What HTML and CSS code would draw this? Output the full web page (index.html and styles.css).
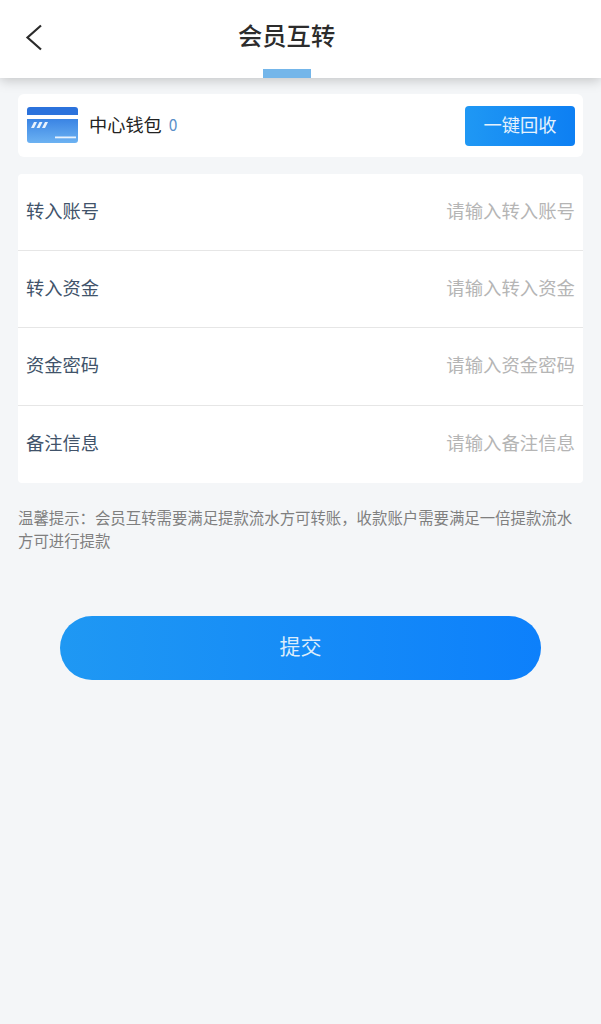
FILE: index.html
```html
<!DOCTYPE html>
<html lang="zh-CN">
<head>
<meta charset="UTF-8">
<title>会员互转</title>
<link rel="stylesheet" href="styles.css">
</head>
<body>
  <header class="top-bar">
    <a class="back-btn" href="#">
      <svg width="18" height="27" viewBox="0 0 18 27"><path d="M16 1.5 L2.5 13.5 L16 25.5" fill="none" stroke="#2b2b2b" stroke-width="2.2"/></svg>
    </a>
    <div class="title-box">
      <h1>会员互转</h1>
      <span class="title-tab"></span>
    </div>
  </header>

  <section class="wallet">
    <svg class="wallet-icon" width="51" height="36" viewBox="0 0 51 36">
      <defs>
        <linearGradient id="cardFill" x1="0" y1="0" x2="0" y2="1">
          <stop offset="0" stop-color="#3a84e4"/>
          <stop offset="1" stop-color="#6cb2f2"/>
        </linearGradient>
      </defs>
      <path d="M0 8V3a3 3 0 0 1 3-3h45a3 3 0 0 1 3 3v5z" fill="#2b72dc"/>
      <path d="M0 12h51v21a3 3 0 0 1-3 3H3a3 3 0 0 1-3-3z" fill="url(#cardFill)"/>
      <path d="M4 21l3-6h3l-3 6zM9.500 21l3-6h3l-3 6zM15 21l3-6h3l-3 6z" fill="#e8f2fd"/>
      <rect x="28" y="29.500" width="21" height="1.800" fill="#e8f2fd"/>
    </svg>
    <span class="wallet-name">中心钱包</span>
    <span class="wallet-amount">0</span>
    <button class="recycle-btn">一键回收</button>
  </section>

  <form class="form-box">
    <label class="form-row"><span>转入账号</span><input type="text" placeholder="请输入转入账号"></label>
    <label class="form-row"><span>转入资金</span><input type="text" placeholder="请输入转入资金"></label>
    <label class="form-row"><span>资金密码</span><input type="password" placeholder="请输入资金密码"></label>
    <label class="form-row"><span>备注信息</span><input type="text" placeholder="请输入备注信息"></label>
  </form>

  <p class="tips">温馨提示：会员互转需要满足提款流水方可转账，收款账户需要满足一倍提款流水方可进行提款</p>

  <div class="submit-wrap">
    <button class="submit-btn">提交</button>
  </div>
</body>
</html>
```

FILE: styles.css
```css
* {
  box-sizing: border-box;
}
body {
  margin: 0;
  height: 1024px;
  overflow: hidden;
  background-color: #f4f6f8;
  font-family: "Noto Sans CJK SC", "Liberation Sans", sans-serif;
}
.top-bar {
  display: flex;
  height: 78px;
  padding-left: 25px;
  background-color: #fff;
  box-shadow: 0 2px 12px rgba(0, 0, 0, 0.22);
}
.back-btn {
  display: block;
  width: 18px;
  margin-top: 24px;
}
.title-box {
  display: flex;
  flex-direction: column;
  align-items: center;
  justify-content: space-between;
  margin-left: 195px;
}
.title-box h1 {
  margin: 18px 0 0;
  font-size: 24.300px;
  line-height: 34px;
  font-weight: 500;
  color: #2c2c2c;
}
.title-tab {
  width: 48px;
  height: 9px;
  margin-left: 1px;
  background-color: #74b6ea;
}
.wallet {
  display: flex;
  align-items: center;
  height: 63px;
  margin: 16px 18px 0;
  padding: 0 8px 0 9px;
  background-color: #fff;
  border-radius: 6px;
}
.wallet-icon {
  margin-bottom: 2px;
}
.wallet-name {
  margin: 0 0 4px 11px;
  font-size: 18.200px;
  color: #222;
}
.wallet-amount {
  margin: 0 0 4px 7px;
  font-size: 15.500px;
  color: #5b8fc9;
}
.recycle-btn {
  width: 110px;
  height: 40px;
  margin-left: auto;
  padding: 0 0 3px;
  border: none;
  border-radius: 4px;
  background: linear-gradient(90deg, #1f98f4, #0d7ff3);
  color: #e6f2fd;
  font-family: inherit;
  font-size: 18.300px;
}
.form-box {
  margin: 17px 18px 0;
  background-color: #fff;
  border-radius: 4px;
}
.form-row {
  display: flex;
  align-items: center;
  justify-content: space-between;
  height: 77.200px;
  padding: 0 8px 4px;
  border-bottom: 1px solid #e6e6e6;
  font-size: 18.300px;
  color: #41536a;
}
.form-row:last-child {
  border-bottom: none;
}
.form-row input {
  width: 300px;
  padding: 0;
  border: none;
  outline: none;
  background: none;
  text-align: right;
  font-family: inherit;
  font-size: 18.400px;
}
.form-row input::placeholder {
  color: #b5b5b5;
  opacity: 1;
}
.tips {
  margin: 23px 18px 0;
  font-size: 15.400px;
  line-height: 23px;
  color: #7f7f7f;
}
.submit-wrap {
  margin: 64px 60px 0;
}
.submit-btn {
  display: block;
  width: 100%;
  height: 64px;
  padding: 0 0 5px;
  border: none;
  border-radius: 32px;
  background: linear-gradient(90deg, #1f98f3, #0d80fb);
  color: #dcecfb;
  font-family: inherit;
  font-size: 21px;
}
```
